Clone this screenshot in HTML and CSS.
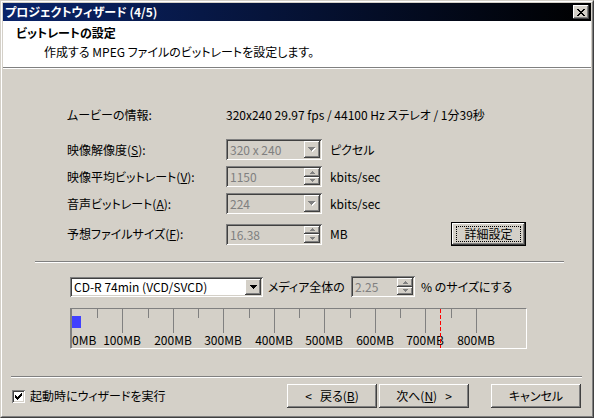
FILE: index.html
```html
<!DOCTYPE html>
<html lang="ja">
<head>
<meta charset="utf-8">
<title>プロジェクトウィザード</title>
<link rel="stylesheet" href="styles.css">
</head>
<body>
<div class="window">
  <div class="frame">
    <div class="titlebar">
      <span class="title">プロジェクトウィザード (4/5)</span>
      <span class="close"><svg width="8" height="7" viewBox="0 0 8 7" shape-rendering="crispEdges"><path fill="#000" d="M0 0h2v1h-2z M6 0h2v1h-2z M1 1h2v1h-2z M5 1h2v1h-2z M2 2h4v1h-4z M3 3h2v1h-2z M2 4h4v1h-4z M1 5h2v1h-2z M5 5h2v1h-2z M0 6h2v1h-2z M6 6h2v1h-2z"/></svg></span>
    </div>
    <div class="header">
      <div class="h-title">ビットレートの設定</div>
      <div class="h-sub">作成する MPEG ファイルのビットレートを設定します。</div>
    </div>
    <div class="content">
      <div class="info">
        <div class="row-info"><span class="label">ムービーの情報:</span><span class="value">320x240 29.97 fps / 44100 Hz ステレオ / 1分39秒</span></div>
        <div class="row row-first">
          <span class="label">映像解像度(<u>S</u>):</span>
          <div class="field disabled w96">
            <span class="ftext">320 x 240</span>
            <span class="dd-btn"><svg width="8" height="5" viewBox="0 0 8 5" shape-rendering="crispEdges"><path fill="#fff" d="M1 1h7v1h-7z M2 2h5v1h-5z M3 3h3v1h-3z M4 4h1v1h-1z"/><path fill="#808080" d="M0 0h7v1h-7z M1 1h5v1h-5z M2 2h3v1h-3z M3 3h1v1h-1z"/></svg></span>
          </div>
          <span class="unit">ピクセル</span>
        </div>
        <div class="row">
          <span class="label">映像平均ビットレート(<u>V</u>):</span>
          <div class="field disabled w96">
            <span class="ftext">1150</span>
            <span class="spin">
              <span class="sb"><svg width="5" height="3" viewBox="0 0 5 3" shape-rendering="crispEdges"><path fill="#808080" d="M2 0h1v1h-1z M1 1h3v1h-3z M0 2h5v1h-5z"/></svg></span>
              <span class="sb"><svg width="5" height="3" viewBox="0 0 5 3" shape-rendering="crispEdges"><path fill="#808080" d="M0 0h5v1h-5z M1 1h3v1h-3z M2 2h1v1h-1z"/></svg></span>
            </span>
          </div>
          <span class="unit">kbits/sec</span>
        </div>
        <div class="row">
          <span class="label">音声ビットレート(<u>A</u>):</span>
          <div class="field disabled w96">
            <span class="ftext">224</span>
            <span class="dd-btn"><svg width="8" height="5" viewBox="0 0 8 5" shape-rendering="crispEdges"><path fill="#fff" d="M1 1h7v1h-7z M2 2h5v1h-5z M3 3h3v1h-3z M4 4h1v1h-1z"/><path fill="#808080" d="M0 0h7v1h-7z M1 1h5v1h-5z M2 2h3v1h-3z M3 3h1v1h-1z"/></svg></span>
          </div>
          <span class="unit">kbits/sec</span>
        </div>
        <div class="row row-est">
          <span class="label">予想ファイルサイズ(<u>F</u>):</span>
          <div class="field disabled w96">
            <span class="ftext">16.38</span>
            <span class="spin">
              <span class="sb"><svg width="5" height="3" viewBox="0 0 5 3" shape-rendering="crispEdges"><path fill="#808080" d="M2 0h1v1h-1z M1 1h3v1h-3z M0 2h5v1h-5z"/></svg></span>
              <span class="sb"><svg width="5" height="3" viewBox="0 0 5 3" shape-rendering="crispEdges"><path fill="#808080" d="M0 0h5v1h-5z M1 1h3v1h-3z M2 2h1v1h-1z"/></svg></span>
            </span>
          </div>
          <span class="unit">MB</span>
          <span class="btn btn-default adv"><span class="focus">詳細設定</span></span>
        </div>
      </div>

      <div class="sep"></div>

      <div class="media-row">
        <div class="field combo-media">
          <span class="ftext enabled">CD-R 74min (VCD/SVCD)</span>
          <span class="dd-btn"><svg width="7" height="4" viewBox="0 0 7 4" shape-rendering="crispEdges"><path fill="#000" d="M0 0h7v1h-7z M1 1h5v1h-5z M2 2h3v1h-3z M3 3h1v1h-1z"/></svg></span>
        </div>
        <span class="mtext">メディア全体の</span>
        <div class="field disabled w64">
          <span class="ftext">2.25</span>
          <span class="spin">
            <span class="sb"><svg width="5" height="3" viewBox="0 0 5 3" shape-rendering="crispEdges"><path fill="#808080" d="M2 0h1v1h-1z M1 1h3v1h-3z M0 2h5v1h-5z"/></svg></span>
            <span class="sb"><svg width="5" height="3" viewBox="0 0 5 3" shape-rendering="crispEdges"><path fill="#808080" d="M0 0h5v1h-5z M1 1h3v1h-3z M2 2h1v1h-1z"/></svg></span>
          </span>
        </div>
        <span class="ptext">% のサイズにする</span>
      </div>

      <div class="ruler">
        <span class="tick zero"></span>
        <span class="tick minor" style="left:26px"></span>
        <span class="tick major" style="left:51px"></span>
        <span class="tick minor" style="left:77px"></span>
        <span class="tick major" style="left:102px"></span>
        <span class="tick minor" style="left:127px"></span>
        <span class="tick major" style="left:152px"></span>
        <span class="tick minor" style="left:178px"></span>
        <span class="tick major" style="left:203px"></span>
        <span class="tick minor" style="left:228px"></span>
        <span class="tick major" style="left:253px"></span>
        <span class="tick minor" style="left:279px"></span>
        <span class="tick major" style="left:304px"></span>
        <span class="tick minor" style="left:329px"></span>
        <span class="tick major" style="left:354px"></span>
        <span class="tick minor" style="left:380px"></span>
        <span class="tick major" style="left:405px"></span>
        <span class="rlabel first">0MB</span>
        <span class="rlabel" style="left:51px">100MB</span>
        <span class="rlabel" style="left:102px">200MB</span>
        <span class="rlabel" style="left:152px">300MB</span>
        <span class="rlabel" style="left:203px">400MB</span>
        <span class="rlabel" style="left:253px">500MB</span>
        <span class="rlabel" style="left:304px">600MB</span>
        <span class="rlabel" style="left:354px">700MB</span>
        <span class="rlabel" style="left:405px">800MB</span>
        <span class="usage" style="width:9px"></span>
        <span class="limit" style="left:369px"></span>
      </div>

      <div class="footer-sep"></div>

      <div class="footer">
        <span class="checkbox"><svg width="7" height="7" viewBox="0 0 7 7" shape-rendering="crispEdges"><path fill="#000" d="M6 0h1v1h-1z M5 1h2v1h-2z M0 2h1v1h-1z M4 2h3v1h-3z M0 3h2v1h-2z M3 3h3v1h-3z M0 4h5v1h-5z M1 5h3v1h-3z M2 6h1v1h-1z"/></svg></span>
        <span class="cblabel">起動時にウィザードを実行</span>
        <span class="btn back"><span class="arr-l">&lt;</span>戻る(<u>B</u>)</span>
        <span class="btn next">次へ(<u>N</u>)<span class="arr-r">&gt;</span></span>
        <span class="btn cancel">キャンセル</span>
      </div>
    </div>
  </div>
</div>
</body>
</html>
```

FILE: styles.css
```css
* {
  box-sizing: border-box;
}

html,
body {
  margin: 0;
  padding: 0;
}

body {
  width: 594px;
  height: 418px;
  overflow: hidden;
  background: #d4d0c8;
  font-family: "Noto Sans CJK JP", "Noto Sans", sans-serif;
  font-size: 12px;
  line-height: 16px;
  color: #000;
  font-feature-settings: "palt";
}

u {
  text-decoration: underline;
  text-underline-offset: 1px;
}

.window {
  width: 594px;
  height: 418px;
  border: 1px solid;
  border-color: #d4d0c8 #404040 #404040 #d4d0c8;
  background: #d4d0c8;
}

.frame {
  height: 100%;
  border: 1px solid;
  border-color: #fff #808080 #808080 #fff;
  padding: 1px;
  display: flex;
  flex-direction: column;
}

.titlebar {
  height: 18px;
  flex-shrink: 0;
  display: flex;
  align-items: center;
  padding: 0 2px 0 2px;
  background: linear-gradient(90deg, #0a246a 0%, #06143a 45%, #000 100%);
  color: #fff;
  font-weight: bold;
}

.title {
  flex: 1;
}

.close {
  width: 16px;
  height: 14px;
  background: #d4d0c8;
  display: flex;
  align-items: center;
  justify-content: center;
  box-shadow: inset -1px -1px #404040, inset 1px 1px #fff, inset -2px -2px #808080;
}

.header {
  height: 47px;
  flex-shrink: 0;
  background: #fff;
  border-bottom: 1px solid #808080;
  padding: 4px 0 0 13px;
}

.h-title {
  font-weight: bold;
}

.h-sub {
  margin-top: 3px;
  padding-left: 28px;
}

.content {
  flex: 1;
  border-top: 1px solid #fff;
  display: flex;
  flex-direction: column;
}

.info {
  margin: 38px 0 0 64px;
  width: 459px;
  display: flex;
  flex-direction: column;
}

.row-info {
  display: flex;
  height: 16px;
}

.label {
  width: 159px;
  flex-shrink: 0;
  white-space: nowrap;
}

.row {
  display: flex;
  align-items: center;
  height: 21px;
  margin-top: 6px;
}

.row-first {
  margin-top: 16px;
}

.row-est {
  margin-top: 8px;
  height: 24px;
}

.unit {
  margin-left: 8px;
  white-space: nowrap;
}

.field {
  height: 21px;
  display: flex;
  padding: 2px;
  flex-shrink: 0;
  box-shadow: inset 1px 1px #808080, inset -1px -1px #fff, inset 2px 2px #404040, inset -2px -2px #d4d0c8;
}

.w96 {
  width: 96px;
}

.w64 {
  width: 64px;
}

.ftext {
  flex: 1;
  padding-left: 2px;
  line-height: 17px;
  white-space: nowrap;
  overflow: hidden;
}

.disabled .ftext {
  color: #808080;
}

.ftext.enabled {
  color: #000;
  background: #fff;
}

.dd-btn {
  width: 16px;
  height: 17px;
  display: flex;
  align-items: center;
  justify-content: center;
  background: #d4d0c8;
  box-shadow: inset -1px -1px #404040, inset 1px 1px #fff, inset -2px -2px #808080;
}

.spin {
  width: 16px;
  display: flex;
  flex-direction: column;
}

.sb {
  flex: 1;
  display: flex;
  align-items: center;
  justify-content: center;
  background: #d4d0c8;
  box-shadow: inset -1px -1px #404040, inset 1px 1px #fff, inset -2px -2px #808080;
}

.btn {
  height: 24px;
  width: 90px;
  display: flex;
  align-items: center;
  justify-content: center;
  background: #d4d0c8;
  white-space: nowrap;
  box-shadow: inset -1px -1px #404040, inset 1px 1px #fff, inset -2px -2px #808080;
}

.arr-l {
  margin-right: 8px;
}

.arr-r {
  margin-left: 8px;
}

.btn-default {
  border: 1px solid #000;
}

.adv {
  width: 75px;
  margin-left: auto;
  padding: 3px 4px;
}

.focus {
  flex: 1;
  align-self: stretch;
  border: 1px dotted #000;
  display: flex;
  align-items: center;
  justify-content: center;
}

.sep {
  margin: 15px 0 0 32px;
  width: 529px;
  height: 2px;
  border-top: 1px solid #808080;
  border-bottom: 1px solid #fff;
}

.media-row {
  margin: 13px 0 0 67px;
  height: 21px;
  display: flex;
  align-items: center;
}

.combo-media {
  width: 193px;
  height: 20px;
  background: #fff;
}

.combo-media .dd-btn {
  height: 16px;
}

.combo-media .ftext {
  line-height: 16px;
}

.mtext {
  margin-left: 5px;
  width: 83px;
  white-space: nowrap;
}

.ptext {
  margin-left: 6px;
  white-space: nowrap;
}

.ruler {
  position: relative;
  margin: 11px 0 0 67px;
  width: 457px;
  height: 41px;
  border: 1px solid;
  border-color: #808080 #fff #fff #808080;
}

.tick {
  position: absolute;
  top: 0;
  width: 1px;
  background: #808080;
}

.tick.zero {
  left: 0;
  height: 39px;
}

.tick.minor {
  height: 9px;
}

.tick.major {
  height: 24px;
}

.rlabel {
  position: absolute;
  top: 23px;
  transform: translateX(-50%);
  white-space: nowrap;
}

.rlabel.first {
  left: 1px;
  transform: none;
}

.usage {
  position: absolute;
  left: 1px;
  top: 7px;
  height: 12px;
  background: #4040ff;
}

.limit {
  position: absolute;
  top: 0;
  width: 1px;
  height: 39px;
  background: repeating-linear-gradient(180deg, #ff0000 0 4px, transparent 4px 6px);
}

.footer-sep {
  margin: 27px 0 0 8px;
  width: 571px;
  height: 2px;
  border-top: 1px solid #808080;
  border-bottom: 1px solid #fff;
}

.footer {
  margin-top: 6px;
  height: 24px;
  display: flex;
  align-items: center;
  padding: 0 10px 0 9px;
}

.checkbox {
  width: 13px;
  height: 13px;
  background: #fff;
  display: flex;
  align-items: center;
  justify-content: center;
  box-shadow: inset 1px 1px #808080, inset -1px -1px #fff, inset 2px 2px #404040, inset -2px -2px #d4d0c8;
}

.cblabel {
  margin-left: 5px;
  white-space: nowrap;
}

.back {
  margin-left: auto;
}

.next {
  margin-left: 2px;
}

.cancel {
  margin-left: 22px;
}
```
